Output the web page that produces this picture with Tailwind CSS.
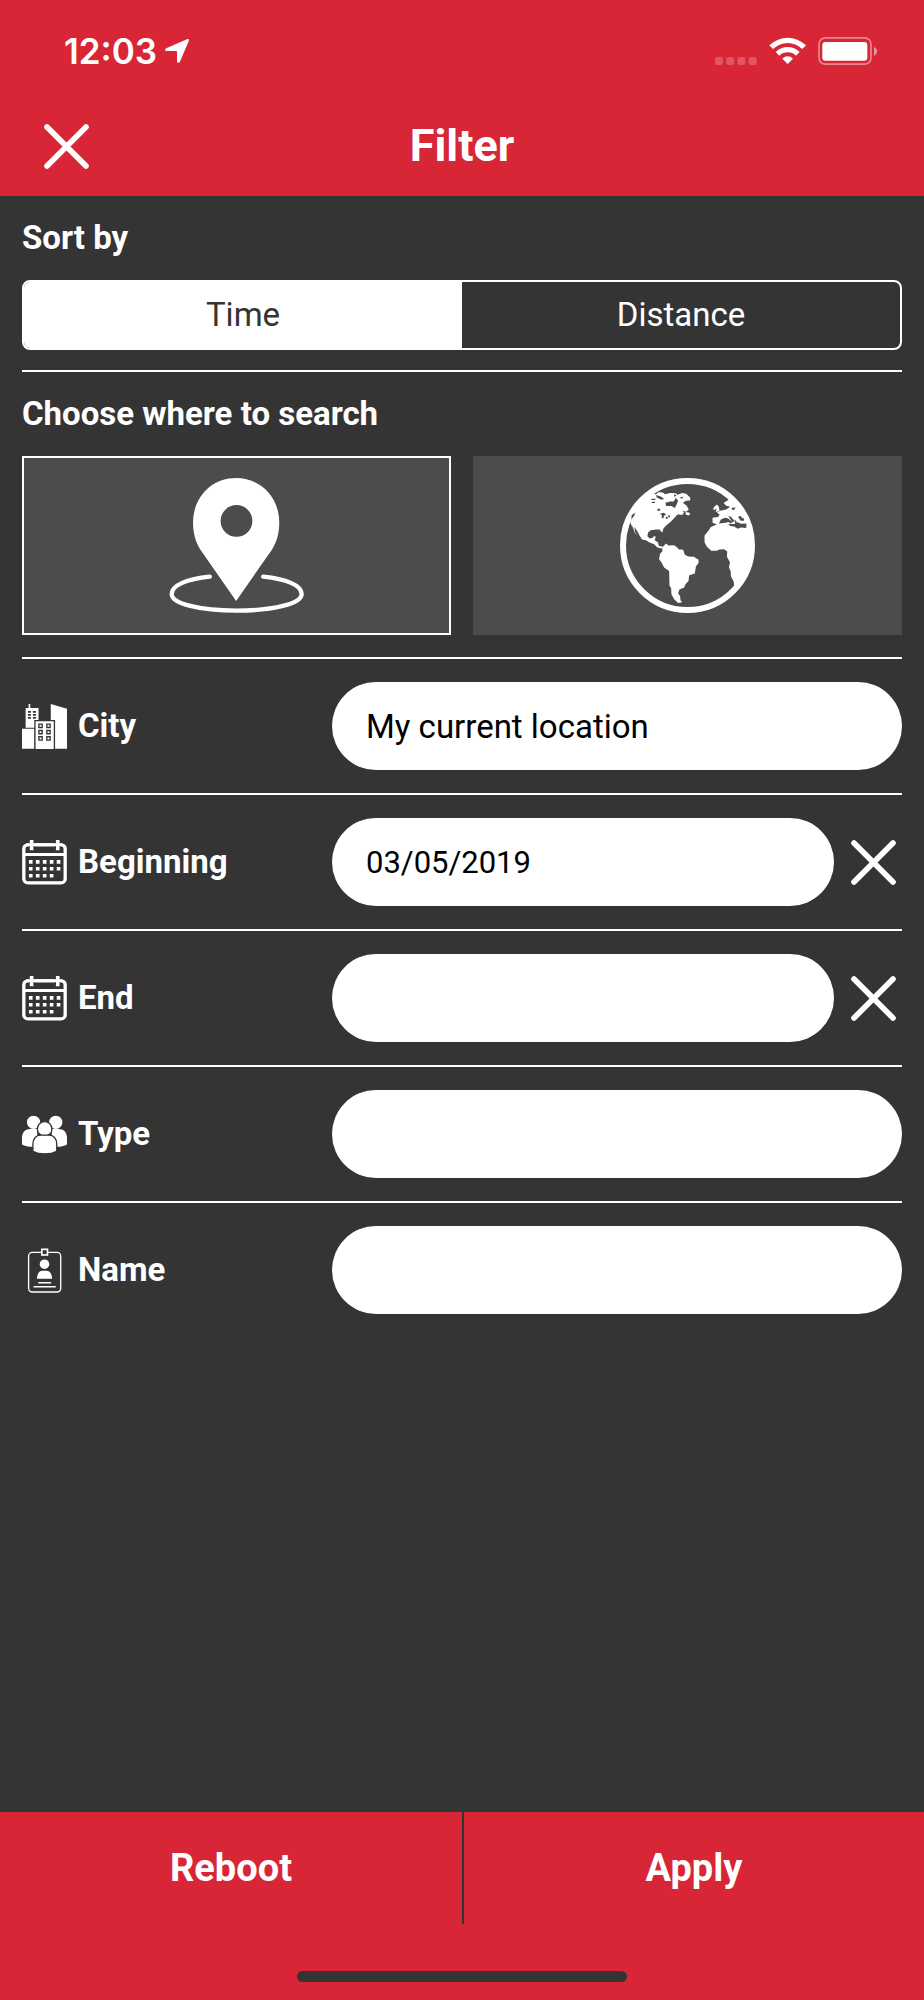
<!DOCTYPE html>
<html lang="en">
<head>
    <meta charset="UTF-8">
    <meta name="viewport" content="width=device-width, initial-scale=1.0">
    <title>Filter</title>
    <script src="https://cdn.jsdelivr.net/npm/@tailwindcss/browser@4"></script>
</head>
<body class="flex min-h-screen flex-col bg-[#343434] font-[Roboto,sans-serif] text-[33px] leading-10 text-white">
    <!-- shared icons -->
    <svg class="hidden" aria-hidden="true">
        <symbol id="icon-close" viewBox="0 0 45 45">
            <path d="M3 3 42 42M42 3 3 42" fill="none" stroke="currentColor" stroke-width="5.6" stroke-linecap="round"/>
        </symbol>
        <symbol id="icon-calendar" viewBox="66 480 136 136">
            <rect x="71.500" y="494.500" width="125" height="115" rx="12" fill="none" stroke="currentColor" stroke-width="10"/>
            <path d="M72 524H196" stroke="currentColor" stroke-width="9"/>
            <path d="M95 489V508M174 489V508" stroke="#343434" stroke-width="16"/>
            <path d="M80 494H188" stroke="currentColor" stroke-width="9"/>
            <path d="M95 480V511M174 480V511" stroke="currentColor" stroke-width="11"/>
            <path d="M87 546H187M87 567H187M87 588H166" stroke="currentColor" stroke-width="11" stroke-dasharray="11 10"/>
        </symbol>
    </svg>

    <header class="bg-[#d82636]">
        <div class="flex h-[97px] items-center justify-between pt-1 pr-[46px] pl-16">
            <div class="flex items-center gap-2 font-[Inter,sans-serif] text-[35px] font-semibold">
                <span>12:03</span>
                <svg class="h-6 w-6" viewBox="0 0 24 24" fill="currentColor"><path d="M22 .2 1.200 9.200C-.4 10-.1 12 1.600 12H11.300Q12 12 12 12.700V22.200C12 24 14.200 24.300 14.900 22.800L23.800 2C24.300.7 23.300-.3 22 .2Z"/></svg>
            </div>
            <div class="flex items-end gap-3">
                <svg class="h-2 w-[42px]" viewBox="0 0 42 8" fill="currentColor" opacity=".22"><rect width="8" height="8" rx="2.500"/><rect x="11.200" width="8" height="8" rx="2.500"/><rect x="22.400" width="8" height="8" rx="2.500"/><rect x="33.600" width="8" height="8" rx="2.500"/></svg>
                <svg class="h-7 w-[37px]" viewBox="916 109 111 84" fill="currentColor">
                    <path d="M917 134Q942 111 972 111T1027 134L1016 145Q996 127 972 127T928 145Z"/>
                    <path d="M936 154Q952 139 972 139T1008 154L997 165Q986 155 972 155T947 165Z"/>
                    <path d="M956 174Q963 167 972 167T988 174L972 190Z"/>
                </svg>
                <svg class="h-7 w-[60px]" viewBox="1064 108 180 84" fill="currentColor">
                    <rect x="1067" y="110.500" width="156" height="79" rx="19" fill="none" stroke="currentColor" stroke-width="5" opacity=".45"/>
                    <rect x="1077" y="123" width="135" height="56" rx="9"/>
                    <path d="M1232 138Q1241 142 1241 151T1232 165Z" opacity=".5"/>
                </svg>
            </div>
        </div>
        <div class="flex h-[99px] items-center px-11">
            <button type="button" aria-label="Close" class="size-[45px]"><svg class="size-full"><use href="#icon-close"/></svg></button>
            <h1 class="flex-1 pb-[2px] text-center text-[45px] font-bold">Filter</h1>
            <span class="w-[45px]"></span>
        </div>
    </header>

    <main class="flex-1 px-[22px]">
        <section class="border-b-2 border-white pb-5">
            <h2 class="py-[22px] font-bold">Sort by</h2>
            <div class="grid h-[70px] grid-cols-2 overflow-hidden rounded-lg border-2 border-white">
                <button type="button" aria-pressed="true" class="bg-white text-[#343434]">Time</button>
                <button type="button" aria-pressed="false">Distance</button>
            </div>
        </section>

        <section class="border-b-2 border-white pb-[22px]">
            <h2 class="py-[22px] font-bold">Choose where to search</h2>
            <div class="grid grid-cols-2 gap-[22px]">
                <button type="button" aria-label="Around a location" aria-pressed="true" class="flex justify-center border-2 border-white bg-[#4c4c4a] py-5">
                    <svg class="size-[135px]" viewBox="58 84 404 404">
                        <path fill="currentColor" fill-rule="evenodd" d="M259 452 151 297C137 275 130 248 130 218C130 141 186 84 259 84S388 141 388 218C388 248 381 275 367 297ZM260 165a47.500 47.500 0 1 0 0 95a47.500 47.500 0 1 0 0-95Z"/>
                        <path fill="none" stroke="currentColor" stroke-width="13" stroke-linecap="round" d="M180 379C112 386 66 405 66 431C66 460 150 481 260 481S455 460 455 431C455 405 408 386 340 379"/>
                    </svg>
                </button>
                <button type="button" aria-label="Everywhere" aria-pressed="false" class="flex justify-center border-2 border-[#4c4c4a] bg-[#4c4c4a] py-5">
                    <svg class="size-[135px]" viewBox="60 54 404 404">
                        <circle cx="262" cy="256" r="193" fill="none" stroke="currentColor" stroke-width="18"/>
                        <!-- north america -->
                        <path fill="currentColor" d="M96 160 120 128 155 101 168 103 176 96 190 98 194 103 210 99 226 100 232 104 246 99 258 101 270 112V121L258 122 248 128 259 136 266 148 258 155 246 152 238 160 229 166 221 175 211 186 198 196 190 205 187 216 182 214 179 208 168 208 152 210 144 217 142 228 149 235 158 233 161 228 167 229 164 240 174 247 176 257 188 260 184 265 172 262 162 252 147 246 138 240 126 238 118 225 112 214 103 200 105 216 112 227 104 218 99 202 92 192Z"/>
                        <path fill="currentColor" d="M232 155 246 151 252 158 246 165 236 163ZM256 156 269 158 268 166 257 164Z"/>
                        <path fill="#4c4c4a" d="M168 105 182 109 192 116 184 119 170 112ZM196 128 210 124 221 124 227 113 234 122 229 134 224 144 214 138 198 138ZM222 103 230 107 222 110ZM238 112 250 110 246 116ZM154 116H166V120H154ZM155 125H165V129H155ZM172 146H180V152H172ZM180 161 191 158 198 163 191 168 190 175 184 172 186 166ZM197 170H203V176H197ZM203 164 211 168 207 174Z"/>
                        <path fill="#4c4c4a" d="M95 165 106 158 102 168 94 178Z"/>
                        <!-- south america -->
                        <path fill="currentColor" d="M186 262 198 250 205 256 222 255 232 263 236 268 249 269 254 284 264 289 281 290 295 299V308L287 319 284 340 267 345 265 362 256 372 252 382 238 388 234 399 240 408 241 420 246 426 234 428 222 417 214 402 213 384 208 376 207 332 192 322 184 306 177 297 180 280 187 274Z"/>
                        <!-- europe and africa -->
                        <path fill="currentColor" d="M370 129 384 120 392 110 412 126 432 152 452 196 458 250 454 300 430 350 402 377 400 364 392 348 391 332 386 322 389 306 380 290 381 274 371 267 357 268 350 272 333 272 320 260 313 246V226L325 211 332 201 350 193 337 188 337 173 354 171 358 163 350 157 360 152 378 148 390 140 378 137ZM340 142 350 133 356 140 358 153 346 156 349 147 339 150Z"/>
                        <path fill="#4c4c4a" d="M356 190 362 178 374 173 384 175 396 186 392 190 384 186 376 188ZM384 168 392 170 402 182 397 187ZM402 178 409 184 405 190ZM384 192 402 192 410 186 422 191 438 190 438 204 422 202 412 206 402 199 390 198ZM413 170 422 168 425 174 431 175 431 182 421 182ZM394 143 406 142 402 149 396 150Z"/>
                    </svg>
                </button>
            </div>
        </section>

        <form id="filter">
            <div class="flex items-center border-b-2 border-white py-[23px]">
                <label for="city" class="flex w-[310px] items-center gap-[11px] font-bold">
                    <svg class="size-[45px]" viewBox="66 72 136 136">
                        <path fill="currentColor" d="M86 72H91V84H116V144H77V84H86ZM153 72 202 86V207H153ZM66 147H104V207H66Z"/>
                        <path fill="currentColor" stroke="#343434" stroke-width="4" d="M105 122H164V211H105Z"/>
                        <path stroke="#343434" stroke-width="5" stroke-dasharray="9 6" d="M84 96H108M84 105H108M84 114H108"/>
                        <path fill="none" stroke="#343434" stroke-width="4" d="M117 133H127V143H117ZM141 133H151V143H141ZM117 152H127V162H117ZM141 152H151V162H141ZM117 171H127V181H117ZM141 171H151V181H141Z"/>
                    </svg>
                    City
                </label>
                <input id="city" type="text" value="My current location" class="h-[88px] min-w-0 flex-1 rounded-full bg-white px-[34px] text-black outline-none">
            </div>

            <div class="flex items-center border-b-2 border-white py-[23px]">
                <label for="beginning" class="flex w-[310px] items-center gap-[11px] font-bold">
                    <svg class="size-[45px]"><use href="#icon-calendar"/></svg>
                    Beginning
                </label>
                <input id="beginning" type="text" value="03/05/2019" class="h-[88px] min-w-0 flex-1 rounded-full bg-white px-[34px] text-[31px] text-black outline-none">
                <button type="button" aria-label="Clear beginning" class="mr-[6px] ml-[17px] size-[45px]"><svg class="size-full"><use href="#icon-close"/></svg></button>
            </div>

            <div class="flex items-center border-b-2 border-white py-[23px]">
                <label for="end" class="flex w-[310px] items-center gap-[11px] font-bold">
                    <svg class="size-[45px]"><use href="#icon-calendar"/></svg>
                    End
                </label>
                <input id="end" type="text" class="h-[88px] min-w-0 flex-1 rounded-full bg-white px-[34px] text-[31px] text-black outline-none">
                <button type="button" aria-label="Clear end" class="mr-[6px] ml-[17px] size-[45px]"><svg class="size-full"><use href="#icon-close"/></svg></button>
            </div>

            <div class="flex items-center border-b-2 border-white py-[23px]">
                <label for="type" class="flex w-[310px] items-center gap-[11px] font-bold">
                    <svg class="size-[45px]" viewBox="66 516 136 136" fill="currentColor">
                        <circle cx="101" cy="547" r="20"/>
                        <circle cx="168" cy="547" r="20"/>
                        <path d="M66 614V594C66 577 76 567 92 567H112V621H98Q78 621 66 614ZM202 614V594C202 577 192 567 176 567H156V621H170Q190 621 202 614Z"/>
                        <circle cx="134.500" cy="567" r="22" stroke="#343434" stroke-width="4"/>
                        <path stroke="#343434" stroke-width="4" d="M99 635V613C99 596 109 586 122 586H148C161 586 171 596 171 613V635Q156 643 135 643T99 635Z"/>
                    </svg>
                    Type
                </label>
                <input id="type" type="text" class="h-[88px] min-w-0 flex-1 rounded-full bg-white px-[34px] text-black outline-none">
            </div>

            <div class="flex items-center py-[23px]">
                <label for="name" class="flex w-[310px] items-center gap-[11px] font-bold">
                    <svg class="size-[45px]" viewBox="66 924 136 136">
                        <rect x="86" y="937" width="97" height="120" rx="11" fill="none" stroke="currentColor" stroke-width="4"/>
                        <rect x="126" y="928" width="17" height="17" fill="#343434" stroke="currentColor" stroke-width="5"/>
                        <circle cx="134" cy="973" r="14.500" fill="currentColor"/>
                        <path fill="currentColor" d="M111 1017C112 1001 119 993 128 993H140C149 993 156 1001 157 1017Z"/>
                        <path d="M115 1029H154M101 1041H168" stroke="currentColor" stroke-width="5"/>
                    </svg>
                    Name
                </label>
                <input id="name" type="text" class="h-[88px] min-w-0 flex-1 rounded-full bg-white px-[34px] text-black outline-none">
            </div>
        </form>
    </main>

    <footer class="bg-[#d82636]">
        <div class="grid h-28 grid-cols-2 text-[38px] font-bold">
            <button type="reset" form="filter">Reboot</button>
            <button type="submit" form="filter" class="border-l-2 border-[#343434]">Apply</button>
        </div>
        <div class="flex h-[76px] items-end justify-center pb-[18px]">
            <div class="h-[11px] w-[330px] rounded-full bg-[#343434]"></div>
        </div>
    </footer>
</body>
</html>
